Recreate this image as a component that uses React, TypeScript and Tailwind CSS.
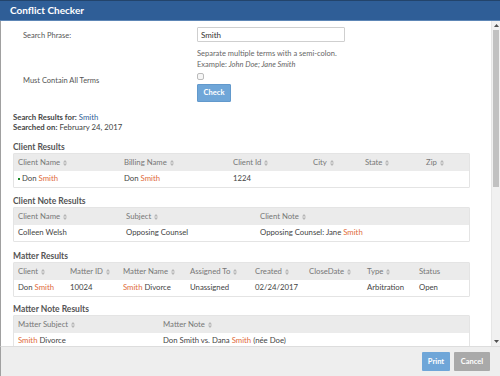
import React from 'react';

type Cell = React.ReactNode;

interface TableProps {
    cols: string;
    headers: Array<{ label: string; sort?: boolean }>;
    row: Cell[];
}

function SortIcon() {
    return (
        <svg width="4" height="6" viewBox="0 0 4 6" className="inline-block ml-[3px] align-middle">
            <path d="M2 0 L4 2.4 L0 2.4 Z" fill="#b5b5b5" />
            <path d="M0 3.6 L4 3.6 L2 6 Z" fill="#b5b5b5" />
        </svg>
    );
}

function Hit({ children }: { children: React.ReactNode }) {
    return <span className="text-[#e06b3a]">{children}</span>;
}

function ResultTable({ cols, headers, row }: TableProps) {
    return (
        <div className="border border-[#e4e4e4] rounded-[1px] text-[7.75px]">
            <div className={`grid ${cols} h-[17px] items-center bg-[#ebebeb] text-[#777]`}>
                {headers.map((h, i) => (
                    <div key={i} className="pl-[4px] whitespace-nowrap">
                        {h.label}
                        {h.sort !== false && <SortIcon />}
                    </div>
                ))}
            </div>
            <div className={`grid ${cols} h-[16px] items-center bg-white text-[#444]`}>
                {row.map((c, i) => (
                    <div key={i} className="pl-[4px] whitespace-nowrap">{c}</div>
                ))}
            </div>
        </div>
    );
}

function Heading({ children }: { children: React.ReactNode }) {
    return <div className="h-[10px] leading-[10px] mb-[1px] font-bold text-[8.5px] text-[#555]">{children}</div>;
}

export default function App() {
    return (
        <div className="w-[500px] h-[376px] flex flex-col bg-white font-['Lato',sans-serif] text-[7.5px] overflow-hidden">
            {/* title bar */}
            <div className="h-[21px] shrink-0 flex items-center pl-[10px] bg-[#2f5e97] border-t border-[#23446b] border-b border-b-[#5d86b6]">
                <span className="text-white font-bold text-[10px]">Conflict Checker</span>
            </div>

            <div className="flex-1 flex min-h-0 border-l border-[#a0a0a0]">
                <div className="flex-1 overflow-hidden pl-[12px] pr-[21px]">
                    {/* search form */}
                    <div className="grid grid-cols-[184px_1fr] pt-[6px] text-[#555]">
                        <div className="pl-[10px] pt-[3px]">Search Phrase:</div>
                        <div>
                            <div className="w-[148px] h-[15px] border border-[#cfcfcf] rounded-[1px] flex items-center pl-[3px] text-[#333] text-[8px]">
                                Smith
                            </div>
                            <div className="mt-[6px] leading-[11px] text-[#666]">Separate multiple terms with a semi-colon.</div>
                            <div className="leading-[11px] text-[#666]">
                                Example: <span className="italic">John Doe; Jane Smith</span>
                            </div>
                        </div>
                        <div className="pl-[10px] pt-[5px]">Must Contain All Terms</div>
                        <div className="pt-[3px]">
                            <div className="w-[7px] h-[7px] border border-[#bbb] rounded-[2px] bg-[#f6f6f6]" />
                            <div className="mt-[4px] w-[34px] h-[18px] bg-[#6fa6d8] border border-[#6299cc] rounded-[1px] flex items-center justify-center text-white font-bold text-[7.5px]">
                                Check
                            </div>
                        </div>
                    </div>

                    {/* summary */}
                    <div className="mt-[10px] text-[#444] leading-[10px] text-[7.75px]">
                        <div><span className="font-bold">Search Results for:</span> <span className="text-[#2f5e97]">Smith</span></div>
                        <div><span className="font-bold">Searched on:</span> February 24, 2017</div>
                    </div>

                    <div className="mt-[10px]">
                        <Heading>Client Results</Heading>
                        <ResultTable
                            cols="grid-cols-[106px_109px_80px_52px_61px_1fr]"
                            headers={[
                                { label: 'Client Name' },
                                { label: 'Billing Name' },
                                { label: 'Client Id' },
                                { label: 'City' },
                                { label: 'State' },
                                { label: 'Zip' },
                            ]}
                            row={[
                                <span className="flex items-center">
                                    <span className="w-[2px] h-[2px] bg-[#1e8a2a] mr-[2px]" />
                                    Don&nbsp;<Hit>Smith</Hit>
                                </span>,
                                <span>Don <Hit>Smith</Hit></span>,
                                '1224',
                                '',
                                '',
                                '',
                            ]}
                        />
                    </div>

                    <div className="mt-[8px]">
                        <Heading>Client Note Results</Heading>
                        <ResultTable
                            cols="grid-cols-[108px_134px_1fr]"
                            headers={[
                                { label: 'Client Name' },
                                { label: 'Subject' },
                                { label: 'Client Note' },
                            ]}
                            row={[
                                'Colleen Welsh',
                                'Opposing Counsel',
                                <span>Opposing Counsel: Jane <Hit>Smith</Hit></span>,
                            ]}
                        />
                    </div>

                    <div className="mt-[9px]">
                        <Heading>Matter Results</Heading>
                        <ResultTable
                            cols="grid-cols-[52px_53px_67px_65px_54px_58px_52px_1fr]"
                            headers={[
                                { label: 'Client' },
                                { label: 'Matter ID' },
                                { label: 'Matter Name' },
                                { label: 'Assigned To' },
                                { label: 'Created' },
                                { label: 'CloseDate' },
                                { label: 'Type' },
                                { label: 'Status', sort: false },
                            ]}
                            row={[
                                <span>Don <Hit>Smith</Hit></span>,
                                '10024',
                                <span><Hit>Smith</Hit> Divorce</span>,
                                'Unassigned',
                                '02/24/2017',
                                '',
                                'Arbitration',
                                'Open',
                            ]}
                        />
                    </div>

                    <div className="mt-[7px]">
                        <Heading>Matter Note Results</Heading>
                        <ResultTable
                            cols="grid-cols-[145px_1fr]"
                            headers={[
                                { label: 'Matter Subject' },
                                { label: 'Matter Note' },
                            ]}
                            row={[
                                <span><Hit>Smith</Hit> Divorce</span>,
                                <span>Don Smith vs. Dana <Hit>Smith</Hit> (née Doe)</span>,
                            ]}
                        />
                    </div>
                </div>

                {/* scrollbar */}
                <div className="w-[9px] shrink-0 flex flex-col bg-[#f1f1f1] border-l border-[#e6e6e6]">
                    <div className="h-[9px] flex items-center justify-center">
                        <svg width="5" height="3" viewBox="0 0 5 3"><path d="M2.5 0 L5 3 L0 3 Z" fill="#505050" /></svg>
                    </div>
                    <div className="h-[157px] mx-[1px] bg-[#c1c1c1]" />
                    <div className="flex-1" />
                    <div className="h-[9px] flex items-center justify-center">
                        <svg width="5" height="3" viewBox="0 0 5 3"><path d="M0 0 L5 0 L2.5 3 Z" fill="#505050" /></svg>
                    </div>
                </div>
            </div>

            {/* footer */}
            <div className="h-[30px] shrink-0 flex items-center justify-end gap-[4px] pr-[10px] bg-[#eeeeee] border-t border-[#dddddd] border-l border-l-[#a0a0a0]">
                <div className="w-[28px] h-[19px] bg-[#6fa6d8] rounded-[1px] flex items-center justify-center text-white font-bold text-[7.5px]">Print</div>
                <div className="w-[36px] h-[19px] bg-[#a9a9a9] rounded-[1px] flex items-center justify-center text-white font-bold text-[7.5px]">Cancel</div>
            </div>
        </div>
    );
}
